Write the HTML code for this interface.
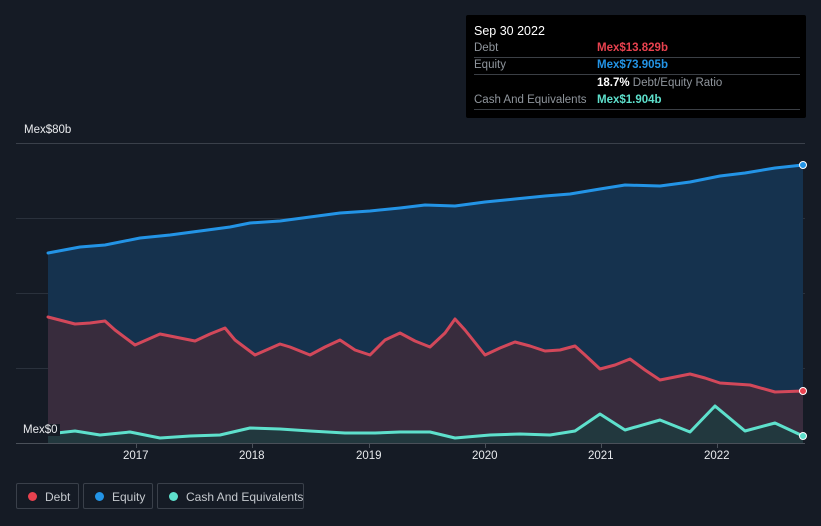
<!DOCTYPE html>
<html><head><style>
body{margin:0;background:#151b25;font-family:"Liberation Sans",sans-serif;}
.w{position:relative;width:821px;height:526px;overflow:hidden;background:#151b25;}
.tt{position:absolute;left:466px;top:15px;width:340px;height:103px;background:#000;border-radius:2px;font-size:11.5px;color:#8f959c;}
.tt .r{position:absolute;left:8px;right:6px;border-bottom:1px solid #3b3f45;height:17px;line-height:17px;}
.lg{position:absolute;top:483px;height:26px;border:1px solid #3a404a;border-radius:2px;color:#c5c9ce;font-size:12px;line-height:26px;box-sizing:border-box;white-space:nowrap;}
.lg i{position:absolute;left:11px;top:8px;width:9px;height:9px;border-radius:50%;}
.ax{position:absolute;color:#e8eaed;font-size:11.5px;}
</style></head><body><div class="w">
<svg width="821" height="526" style="position:absolute;left:0;top:0">
<g stroke="#2a313c" stroke-width="1">
<line x1="16" y1="143.5" x2="805" y2="143.5" stroke="#3a404a"/><line x1="16" y1="218.5" x2="805" y2="218.5"/><line x1="16" y1="293.5" x2="805" y2="293.5"/><line x1="16" y1="368.5" x2="805" y2="368.5"/>
</g>
<polygon fill="#15324e" points="48,443 48,253 80,247 105,245 140,238 170,235 200,231 230,227 250,223 280,221 310,217 340,213 370,211 400,208 425,205 455,206 485,202 515,199 545,196 570,194 600,189 625,185 660,186 690,182 720,176 745,173 775,168 803,165 803,443"/>
<polygon fill="#382c3d" points="48,443 48,317 75,324 90,323 105,321 115,330 135,345 160,334 175,337 195,341 210,334 225,328 235,340 255,355 280,344 290,347 310,355 325,347 340,340 355,350 370,355 385,340 400,333 415,341 430,347 445,333 455,319 465,330 485,355 500,348 515,342 530,346 545,351 560,350 575,346 585,355 600,369 615,365 630,359 645,370 660,380 680,376 690,374 705,378 720,383 750,385 775,392 803,391 803,443"/>
<polygon fill="#22383e" points="48,443 48,434 75,431 100,435 130,432 160,438 190,436 220,435 250,428 280,429 310,431 345,433 375,433 400,432 430,432 455,438 490,435 520,434 550,435 575,431 600,414 625,430 660,420 690,432 715,406 745,431 775,423 803,436 803,443"/>
<g fill="none" stroke-width="3" stroke-linejoin="round" stroke-linecap="round">
<polyline stroke="#2394e6" points="48,253 80,247 105,245 140,238 170,235 200,231 230,227 250,223 280,221 310,217 340,213 370,211 400,208 425,205 455,206 485,202 515,199 545,196 570,194 600,189 625,185 660,186 690,182 720,176 745,173 775,168 803,165"/>
<polyline stroke="#d2485a" points="48,317 75,324 90,323 105,321 115,330 135,345 160,334 175,337 195,341 210,334 225,328 235,340 255,355 280,344 290,347 310,355 325,347 340,340 355,350 370,355 385,340 400,333 415,341 430,347 445,333 455,319 465,330 485,355 500,348 515,342 530,346 545,351 560,350 575,346 585,355 600,369 615,365 630,359 645,370 660,380 680,376 690,374 705,378 720,383 750,385 775,392 803,391"/>
<polyline stroke="#5ee0cc" points="48,434 75,431 100,435 130,432 160,438 190,436 220,435 250,428 280,429 310,431 345,433 375,433 400,432 430,432 455,438 490,435 520,434 550,435 575,431 600,414 625,430 660,420 690,432 715,406 745,431 775,423 803,436"/>
</g>
<line x1="16" y1="443.5" x2="805" y2="443.5" stroke="#4a5059"/>
<g stroke="#4a5059"><line x1="136.5" y1="443" x2="136.5" y2="448"/><line x1="252.5" y1="443" x2="252.5" y2="448"/><line x1="369.5" y1="443" x2="369.5" y2="448"/><line x1="485.5" y1="443" x2="485.5" y2="448"/><line x1="601.5" y1="443" x2="601.5" y2="448"/><line x1="717.5" y1="443" x2="717.5" y2="448"/></g>
<circle cx="803" cy="165" r="3.5" fill="#2394e6" stroke="#fff" stroke-width="1"/>
<circle cx="803" cy="391" r="3.5" fill="#e8424f" stroke="#fff" stroke-width="1"/>
<circle cx="803" cy="436" r="3.5" fill="#5ee0cc" stroke="#fff" stroke-width="1"/>
</svg>
<div class="ax" style="left:24px;top:124px">Mex$80b</div>
<div class="ax" style="left:23px;top:424px;background:#151b25;padding-right:2px">Mex$0</div>
<div class="ax" style="left:123px;top:450px">2017</div>
<div class="ax" style="left:239px;top:450px">2018</div>
<div class="ax" style="left:356px;top:450px">2019</div>
<div class="ax" style="left:472px;top:450px">2020</div>
<div class="ax" style="left:588px;top:450px">2021</div>
<div class="ax" style="left:704px;top:450px">2022</div>
<div class="tt">
<div style="position:absolute;left:8px;top:9px;color:#fff;font-size:12.5px">Sep 30 2022</div>
<div class="r" style="top:25px">Debt<span style="position:absolute;left:123px;color:#e8424f;font-weight:bold">Mex$13.829b</span></div>
<div class="r" style="top:42px">Equity<span style="position:absolute;left:123px;color:#2394e6;font-weight:bold">Mex$73.905b</span></div>
<div style="position:absolute;left:131px;top:60px;line-height:17px"><b style="color:#fff">18.7%</b> Debt/Equity Ratio</div>
<div class="r" style="top:77px">Cash And Equivalents<span style="position:absolute;left:123px;color:#5ee0cc;font-weight:bold">Mex$1.904b</span></div>
</div>
<div class="lg" style="left:16px;width:63px"><i style="background:#e8424f"></i><span style="position:absolute;left:28px">Debt</span></div>
<div class="lg" style="left:83px;width:70px"><i style="background:#2394e6"></i><span style="position:absolute;left:28px">Equity</span></div>
<div class="lg" style="left:157px;width:147px"><i style="background:#5ee0cc"></i><span style="position:absolute;left:28px">Cash And Equivalents</span></div>
</div></body></html>
